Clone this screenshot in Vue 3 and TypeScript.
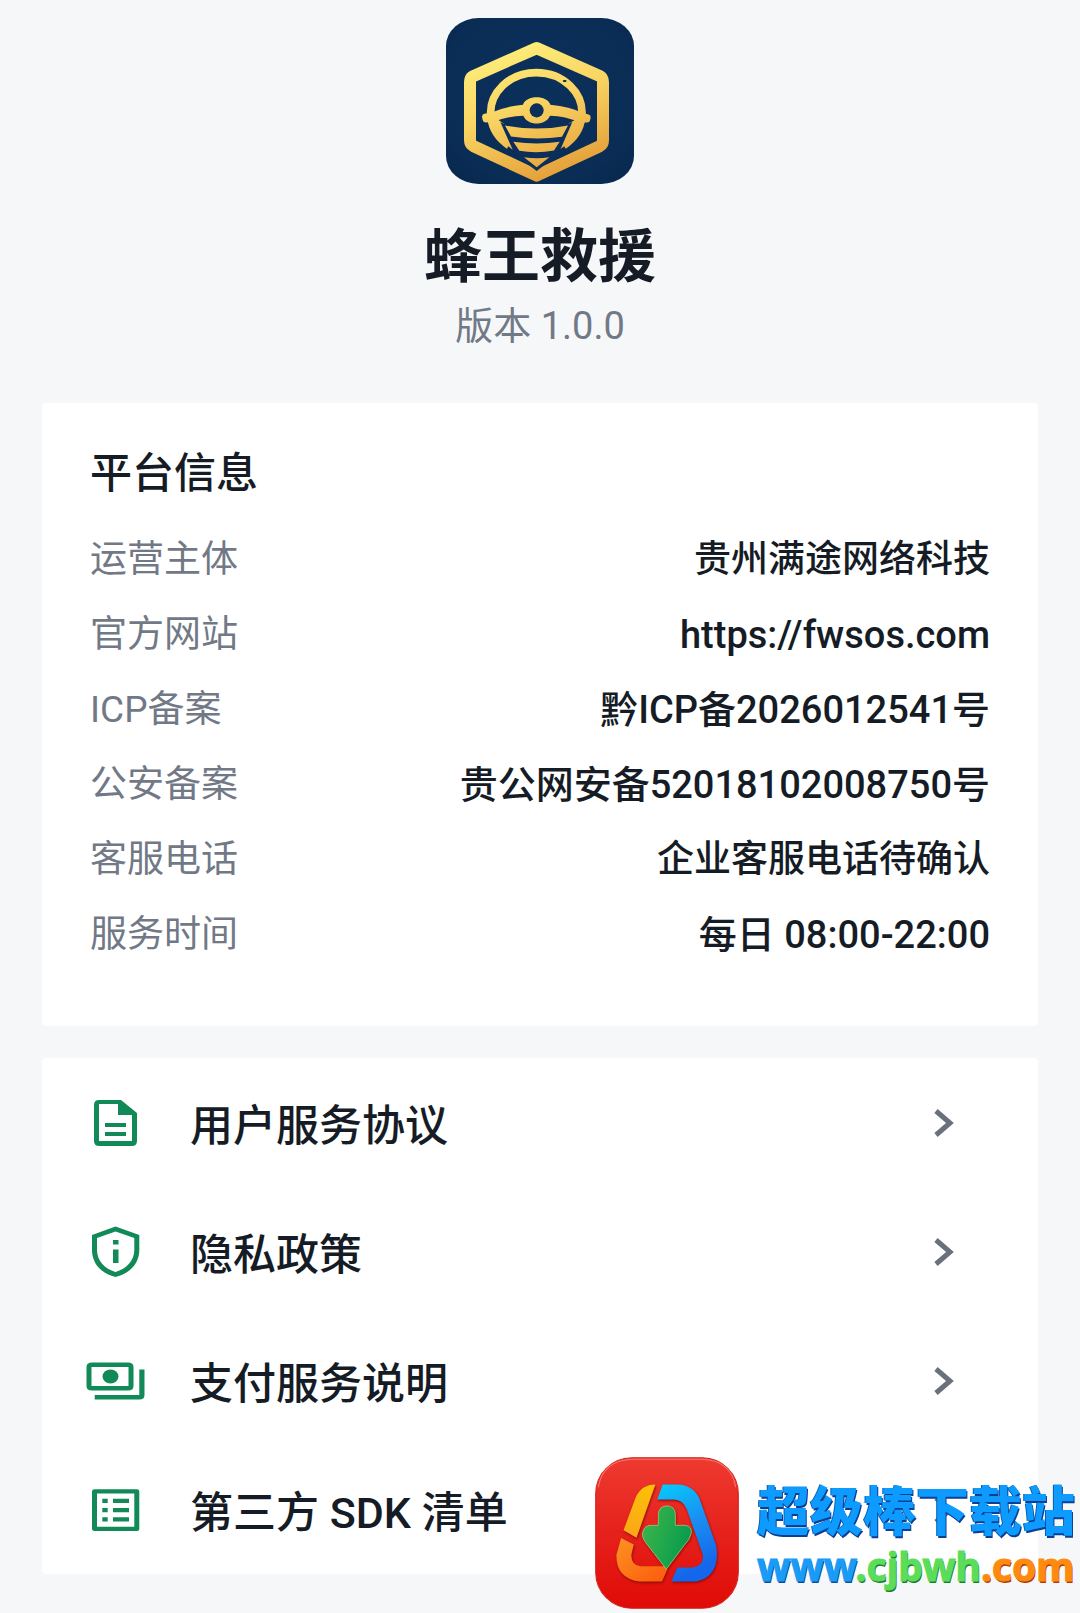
<script setup lang="ts">
interface InfoRow {
  label: string
  value: string
  href?: string
  latin?: boolean
}

interface MenuItem {
  icon: 'doc' | 'shield' | 'money' | 'list'
  label: string
}

const rows: InfoRow[] = [
  { label: '运营主体', value: '贵州满途网络科技' },
  { label: '官方网站', value: 'https://fwsos.com', href: 'https://fwsos.com', latin: true },
  { label: 'ICP备案', value: '黔ICP备2026012541号', latin: true },
  { label: '公安备案', value: '贵公网安备52018102008750号', latin: true },
  { label: '客服电话', value: '企业客服电话待确认' },
  { label: '服务时间', value: '每日 08:00-22:00', latin: true },
]

const menu: MenuItem[] = [
  { icon: 'doc', label: '用户服务协议' },
  { icon: 'shield', label: '隐私政策' },
  { icon: 'money', label: '支付服务说明' },
  { icon: 'list', label: '第三方 SDK 清单' },
]
</script>

<template>
  <main class="page">
    <header class="hero">
      <svg class="logo" viewBox="47 55 564 496" preserveAspectRatio="none" aria-hidden="true">
        <defs>
          <linearGradient id="gold" gradientUnits="userSpaceOnUse" x1="230" y1="120" x2="390" y2="550">
            <stop offset="0" stop-color="#fdf07c" />
            <stop offset="0.45" stop-color="#f9d463" />
            <stop offset="1" stop-color="#e29a35" />
          </linearGradient>
          <radialGradient id="navy" cx="0.5" cy="0.45" r="0.75">
            <stop offset="0" stop-color="#0b3059" />
            <stop offset="0.7" stop-color="#0a2d56" />
            <stop offset="1" stop-color="#08264b" />
          </radialGradient>
        </defs>
        <rect x="47" y="55" width="564" height="496" rx="98" ry="84" fill="url(#navy)" />
        <path
          d="M319 145 L508 228 Q518 234 518 246 L518 420 Q518 432 508 438 L319 526 L130 438 Q119 432 119 420 L119 246 Q119 234 130 228 Z"
          fill="none" stroke="url(#gold)" stroke-width="36" stroke-linejoin="round"
        />
        <path
          d="M236 436 A137 121 0 1 1 400 436"
          fill="none" stroke="url(#gold)" stroke-width="23"
        />
        <path d="M199 356 L222 372 L253 452 Q207 423 186 369 Z M439 356 L414 372 L384 452 Q430 423 450 369 Z" fill="url(#gold)" />
        <path
          d="M162 341 L182 338 Q220 320 278 314 C286 284 352 284 360 314 Q420 320 455 338 L475 343 Q481 345 481 352 L479 361 Q478 367 470 367 L448 367 Q405 348 359 347 C346 378 292 378 279 347 Q234 348 190 365 L166 367 Q158 367 157 360 L155 350 Q155 343 162 341 Z"
          fill="url(#gold)"
        />
        <circle cx="319" cy="331" r="21" fill="#0b2f5a" />
        <path d="M210 366 L222 372 Q319 392 414 372 L426 366 L384 462 L319 512 L253 462 Z" fill="#0b2f5a" />
        <g fill="url(#gold)">
          <path d="M224 376 Q319 395 413 376 L395 410 Q319 420 242 409 Z" />
          <path d="M249 425 Q319 435 388 425 L371 451 Q319 461 267 452 Z" />
          <path d="M281 471 Q319 477 357 471 L319 501 Z" />
        </g>
        <ellipse cx="403" cy="243" rx="6" ry="3" fill="#0b2440" />
      </svg>
      <h1 class="name">蜂王救援</h1>
      <p class="version">版本 1.0.0</p>
    </header>

    <section class="card info">
      <h2 class="heading">平台信息</h2>
      <dl class="rows">
        <div v-for="row in rows" :key="row.label" class="row">
          <dt>{{ row.label }}</dt>
          <dd :class="{ latin: row.latin }">
            <a v-if="row.href" :href="row.href">{{ row.value }}</a>
            <template v-else>{{ row.value }}</template>
          </dd>
        </div>
      </dl>
    </section>

    <nav class="card">
      <a v-for="item in menu" :key="item.label" class="item" href="#">
        <svg class="icon" viewBox="0 0 72 60" aria-hidden="true">
          <template v-if="item.icon === 'doc'">
            <path
              fill-rule="evenodd"
              d="M19 7 H41 L57 20 V48 Q57 53 52 53 H19 Q14 53 14 48 V12 Q14 7 19 7 Z M19 11 V48 H52 V22 H38 V11 Z M25 30 H46 V34 H25 Z M25 39 H46 V43 H25 Z"
            />
          </template>
          <template v-else-if="item.icon === 'shield'">
            <path
              fill-rule="evenodd"
              d="M35.500 4.500 L59.300 13 V28 C59.300 42 49 52 35.500 55 C22 52 12 42 12 28 V13 Z M35.500 9.500 L17 16 V28 C17 38.500 24.500 47 35.500 50 C46.500 47 54.300 38.500 54.300 28 V16 Z M33 18 H38.500 V22.500 H33 Z M33 27.500 H38.500 V41 H33 Z"
            />
          </template>
          <template v-else-if="item.icon === 'money'">
            <path
              fill-rule="evenodd"
              d="M12 11.500 H48 Q53.500 11.500 53.500 16 V35 Q53.500 39.500 48 39.500 H12 Q6.500 39.500 6.500 35 V16 Q6.500 11.500 12 11.500 Z M11.500 16 V35 H48.500 V16 Z"
            />
            <ellipse cx="30.500" cy="25.500" rx="8" ry="7" />
            <path d="M59.300 18.500 H64.500 V44 Q64.500 48.500 59.500 48.500 H14.700 V44 H59.300 Z" />
          </template>
          <template v-else>
            <path
              fill-rule="evenodd"
              d="M14.500 9.300 H57 Q59.300 9.300 59.300 11.500 V49 Q59.300 51 57 51 H14.500 Q12 51 12 49 V11.500 Q12 9.300 14.500 9.300 Z M17 13.500 V46.700 H54.300 V13.500 Z"
            />
            <path d="M22.300 18.700 h5.400 v4.200 h-5.400 z m0 9.300 h5.400 v4.200 h-5.400 z m0 9.300 h5.400 v4.200 h-5.400 z M33 18.700 h16 v4.200 h-16 z m0 9.300 h16 v4.200 h-16 z m0 9.300 h16 v4.200 h-16 z" />
          </template>
        </svg>
        <span class="label">{{ item.label }}</span>
        <svg class="chevron" viewBox="0 0 20 28" aria-hidden="true">
          <path d="M2 2 L16 14 L2 26" />
        </svg>
      </a>
    </nav>

    <aside class="mark">
      <svg class="mark-icon" viewBox="48 50 430 454" preserveAspectRatio="none" aria-hidden="true">
        <defs>
          <linearGradient id="red" x1="0" y1="0" x2="0" y2="1">
            <stop offset="0" stop-color="#ee3a30" />
            <stop offset="0.5" stop-color="#e6211c" />
            <stop offset="1" stop-color="#e00b06" />
          </linearGradient>
          <linearGradient id="blue" x1="0" y1="0" x2="0.3" y2="1">
            <stop offset="0" stop-color="#05cdfb" />
            <stop offset="0.5" stop-color="#1a90f2" />
            <stop offset="1" stop-color="#1466ea" />
          </linearGradient>
          <linearGradient id="yellow" x1="0" y1="0" x2="0" y2="1">
            <stop offset="0" stop-color="#fdc007" />
            <stop offset="1" stop-color="#fba61a" />
          </linearGradient>
          <linearGradient id="orange" x1="0" y1="0" x2="1" y2="1">
            <stop offset="0" stop-color="#fd9322" />
            <stop offset="1" stop-color="#fb5a0c" />
          </linearGradient>
          <linearGradient id="green" x1="0" y1="0.2" x2="1" y2="0.6">
            <stop offset="0" stop-color="#3cb54a" />
            <stop offset="0.5" stop-color="#22a84c" />
            <stop offset="1" stop-color="#049a4c" />
          </linearGradient>
        </defs>
        <rect x="50" y="52" width="426" height="450" rx="108" fill="url(#red)" stroke="#d3221c" stroke-width="3" />
        <path d="M58 140 Q72 60 158 57 H368 Q454 60 468 140" fill="none" stroke="#f77a70" stroke-width="3" />
        <g class="mark-shapes">
          <path fill="url(#yellow)" d="M228 132 Q186 132 169 172 L133 269 L172 291 L228 134 Z" />
          <path fill="url(#blue)" d="M250 132 H296 Q340 134 359 172 L410 314 Q424 405 350 422 H276 L294 380 H340 Q373 376 370 342 L322 206 Q310 178 284 177 H234 Z" />
          <path fill="url(#orange)" d="M126 292 L164 311 L157 340 Q154 372 184 376 H256 L264 386 L248 422 H180 Q110 412 112 342 Z" />
          <path fill="url(#green)" stroke="#b9d98a" stroke-width="2" d="M237 220 Q240 196 263 196 Q286 196 288 220 V254 H318 Q340 258 335 280 Q330 298 316 312 L261 385 L204 312 Q188 294 190 276 Q196 254 214 254 H237 Z" />
        </g>
      </svg>
      <div class="mark-text">
        <strong class="mark-name">超级棒下载站</strong>
        <span class="mark-url"><span class="c-blue">www</span><span class="c-green">.cjbwh</span><span class="c-orange">.com</span></span>
      </div>
    </aside>
  </main>
</template>

<style>
body {
  margin: 0;
  background: #f5f7f9;
}
</style>

<style scoped>
.page {
  position: relative;
  box-sizing: border-box;
  min-height: 100vh;
  padding: 18px 42px 39px;
  background: #f5f7f9;
  color: #161c26;
  font-family: Roboto, "Noto Sans CJK SC", sans-serif;
}

.hero {
  display: flex;
  flex-direction: column;
  align-items: center;
  padding-bottom: 53px;
}

.logo {
  width: 188px;
  height: 166px;
}

.name {
  margin: 37px 0 0;
  font-size: 58px;
  line-height: 72px;
  font-weight: 700;
}

.version {
  margin: 9px 0 0;
  color: #727986;
  font-size: 38px;
  line-height: 48px;
}

.card {
  background: #fff;
  border-radius: 4px;
}

.info {
  margin-bottom: 32px;
  padding: 44px 48px 54px;
}

.heading {
  margin: 0 0 21px;
  font-size: 42px;
  line-height: 54px;
  font-weight: 500;
}

.rows {
  margin: 0;
}

.row {
  display: flex;
  align-items: center;
  justify-content: space-between;
  height: 75px;
  font-size: 37px;
  line-height: 48px;
}

.row dt {
  color: #727986;
}

.row dd {
  margin: 0;
  font-weight: 500;
  text-align: right;
}

.row .latin {
  font-size: 38px;
}

.row a {
  color: inherit;
  text-decoration: none;
}

.item {
  display: flex;
  align-items: center;
  height: 129px;
  padding: 0 84px 0 38px;
  color: inherit;
  text-decoration: none;
}

.icon {
  width: 72px;
  height: 60px;
  fill: #128a58;
}

.label {
  flex: 1;
  padding-top: 6px;
  margin-left: 38px;
  font-size: 43px;
  line-height: 56px;
  font-weight: 500;
}

.chevron {
  width: 20px;
  height: 28px;
  fill: none;
  stroke: #6a707c;
  stroke-width: 5;
}

.mark {
  position: absolute;
  right: 5px;
  bottom: 4px;
  display: flex;
  align-items: center;
  gap: 18px;
}

.mark-icon {
  width: 144px;
  height: 152px;
}

.mark-shapes {
  filter: drop-shadow(2px 4px 3px #8a0d0a);
}

.mark-text {
  display: flex;
  flex-direction: column;
}

.mark-name {
  color: #0d9bff;
  font-family: "Noto Sans CJK SC", sans-serif;
  font-size: 53px;
  line-height: 66px;
  font-weight: 900;
  text-shadow: 1px 2px 0 #0a3f94, -1px 0 0 #0a5fb4;
}

.mark-url {
  font-family: "Noto Sans", sans-serif;
  font-size: 39px;
  line-height: 50px;
  font-weight: 700;
  -webkit-text-stroke: 1px currentColor;
}

.c-blue {
  color: #1a9bf5;
  text-shadow: 1px 2px 0 #0b4a9c;
}

.c-green {
  color: #5bdc5b;
  text-shadow: 1px 2px 0 #1b7d2c;
}

.c-orange {
  color: #ff8a10;
  text-shadow: 1px 2px 0 #b03c05;
}
</style>
